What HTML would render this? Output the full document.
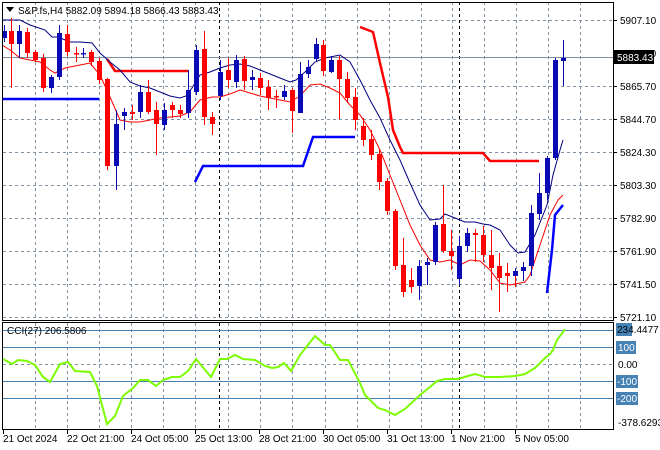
<!DOCTYPE html>
<html><head><meta charset="utf-8"><style>
body{margin:0;background:#fff;width:660px;height:450px;overflow:hidden;font-family:"Liberation Sans",sans-serif}
svg{display:block}
text{font-family:"Liberation Sans",sans-serif;font-size:10px;fill:#000}
</style></head><body>
<svg width="660" height="450" xmlns="http://www.w3.org/2000/svg">
<rect width="660" height="450" fill="#fff"/>
<g stroke="#8090a0" stroke-dasharray="3,3" stroke-width="1">
<path d="M35.5 2V320M67.5 2V320M99.5 2V320M131.5 2V320M163.5 2V320M228.5 2V320M260.5 2V320M292.5 2V320M325.5 2V320M357.5 2V320M389.5 2V320M421.5 2V320M452.5 2V320M484.5 2V320M516.5 2V320M548.5 2V320M580.5 2V320M195.5 2V320"/>
<path d="M35.5 323V429M67.5 323V429M99.5 323V429M131.5 323V429M163.5 323V429M228.5 323V429M260.5 323V429M292.5 323V429M325.5 323V429M357.5 323V429M389.5 323V429M421.5 323V429M452.5 323V429M484.5 323V429M516.5 323V429M548.5 323V429M580.5 323V429M195.5 323V429"/>
<path d="M3 20.5H613M3 86.5H613M3 119.5H613M3 152.5H613M3 185.5H613M3 218.5H613M3 251.5H613M3 284.5H613M3 317.5H613M3 364.5H613"/>
</g>
<path d="M219.5 2V320M219.5 323V429M459.5 2V320M459.5 323V429" stroke="#000" stroke-dasharray="3,3"/>
<path d="M3 57.5H613" stroke="#8090a0"/>
<!-- thick lines -->
<polyline points="2,99 99,99" fill="none" stroke="#0000ff" stroke-width="2.5"/>
<polyline points="195,182 203,166 303,166 313,137 355,137" fill="none" stroke="#0000ff" stroke-width="2.5"/>
<polyline points="547,293 552,250 555,215 563,205" fill="none" stroke="#0000ff" stroke-width="2.5"/>
<polyline points="107,59 115,71 188,71" fill="none" stroke="#ff0000" stroke-width="2.5"/>
<polyline points="360,27 373,32 380,63 388,97 393,130 400,147 403,153 483,153 490,161 539,161" fill="none" stroke="#ff0000" stroke-width="2.5"/>
<!-- MAs -->
<polyline points="2,20 20,20 30,25 45,30 52,37 58,37 70,42 80,42 92,43 100,53 110,62 120,70 130,82 140,86 150,88 160,92 170,96 180,98 186,96 192,88 200,75 210,72 220,68 230,65 240,64 250,66 260,70 270,74 280,78 290,82 296,80 305,72 315,62 325,58 340,55 350,62 360,80 370,100 380,118 390,140 400,160 410,183 420,205 430,220 440,219 445,214 455,218 465,222 475,222 483,224 490,225 500,230 510,245 518,253 525,252 535,235 547,205 553,175 560,150 563,140" fill="none" stroke="#000080" stroke-width="1"/>
<polyline points="2,45 10,50 20,58 30,60 40,62 50,70 55,73 65,68 80,65 90,63 100,75 110,97 120,120 130,122 140,122 150,120 160,118 170,117 180,116 190,112 200,100 212,97 220,97 230,94 240,90 250,93 260,96 270,98 280,100 290,102 300,96 310,85 320,84 330,88 340,93 350,105 360,115 370,130 380,150 390,175 400,200 410,225 420,245 430,260 440,262 450,260 460,265 470,260 480,261 490,270 500,283 510,285 525,282 530,275 540,245 550,215 558,200 563,195" fill="none" stroke="#ff0000" stroke-width="1"/>
<!-- candles -->
<g stroke-width="1">
<g stroke="#0a0ab4" fill="#0a0ab4">
<path d="M4.5 25V42M19.5 25V58M51.5 75V93M59.5 25V80M83.5 48V58M116.5 110V190M124.5 108V130M140.5 85V118M164.5 103V130M188.5 70V118M196.5 45V95M220.5 60V100M236.5 55V88M252.5 70V90M284.5 85V100M300.5 62V113M308.5 60V78M316.5 38V62M331.5 56V73M419.5 260V300M427.5 258V285M435.5 222V265M459.5 236V285M467.5 228V252M515.5 268V285M523.5 262V281M531.5 205V276M539.5 173V220M547.5 156V200M555.5 58V160M563.5 40V86"/>
</g>
<g stroke="#ff0000" fill="#ff0000">
<path d="M11.5 18V88M27.5 28V58M35.5 50V62M43.5 54V92M67.5 25V56M76.5 47V62M91.5 50V66M99.5 58V84M107.5 78V170M132.5 105V120M148.5 80V114M156.5 102V155M172.5 102V118M180.5 105V118M204.5 31V125M212.5 112V135M228.5 58V88M244.5 56V90M260.5 73V95M268.5 80V110M276.5 90V108M292.5 88V133M323.5 40V76M339.5 56V119M347.5 72V103M355.5 88V130M363.5 118V146M371.5 130V160M379.5 150V190M387.5 178V215M395.5 209V270M403.5 238V297M411.5 268V293M443.5 185V253M451.5 230V270M475.5 229V262M483.5 226V262M491.5 230V290M499.5 253V312M507.5 263V292M515.5 272V287"/>
</g>
<g fill="#0a0ab4">
<rect x="2" y="31" width="5" height="7"/><rect x="17" y="31" width="5" height="13"/><rect x="49" y="77" width="5" height="11"/><rect x="57" y="33" width="5" height="44"/><rect x="81" y="53" width="5" height="1.5"/><rect x="114" y="124" width="5" height="42"/><rect x="122" y="112" width="5" height="4"/><rect x="138" y="92" width="5" height="20"/><rect x="162" y="110" width="5" height="15"/><rect x="186" y="90" width="5" height="23"/><rect x="194" y="50" width="5" height="42"/><rect x="218" y="72" width="5" height="24"/><rect x="234" y="60" width="5" height="22"/><rect x="250" y="77" width="5" height="3"/><rect x="282" y="91" width="5" height="6"/><rect x="298" y="74" width="5" height="39"/><rect x="306" y="67" width="5" height="7"/><rect x="314" y="44" width="5" height="15"/><rect x="329" y="60" width="5" height="12"/><rect x="417" y="266" width="5" height="20"/><rect x="425" y="262" width="5" height="3"/><rect x="433" y="225" width="5" height="37"/><rect x="457" y="246" width="5" height="33"/><rect x="465" y="233" width="5" height="13"/><rect x="513" y="271" width="5" height="5"/><rect x="521" y="267" width="5" height="4"/><rect x="529" y="213" width="5" height="53"/><rect x="537" y="193" width="5" height="21"/><rect x="545" y="158" width="5" height="35"/><rect x="553" y="60" width="5" height="98"/><rect x="561" y="58" width="5" height="3"/>
</g>
<g fill="#ff0000">
<rect x="9" y="31" width="5" height="13"/><rect x="25" y="32" width="5" height="21"/><rect x="33" y="52" width="5" height="8"/><rect x="41" y="58" width="5" height="30"/><rect x="65" y="34" width="5" height="18"/><rect x="74" y="53" width="5" height="1.5"/><rect x="89" y="52" width="5" height="10"/><rect x="97" y="61" width="5" height="19"/><rect x="105" y="79" width="5" height="87"/><rect x="130" y="112" width="5" height="2"/><rect x="146" y="92" width="5" height="20"/><rect x="154" y="110" width="5" height="14"/><rect x="170" y="105" width="5" height="5"/><rect x="178" y="110" width="5" height="4"/><rect x="202" y="49" width="5" height="68"/><rect x="210" y="117" width="5" height="7"/><rect x="226" y="70" width="5" height="10"/><rect x="242" y="59" width="5" height="22"/><rect x="258" y="78" width="5" height="10"/><rect x="266" y="87" width="5" height="11"/><rect x="274" y="96" width="5" height="1.5"/><rect x="290" y="90" width="5" height="21"/><rect x="321" y="45" width="5" height="26"/><rect x="337" y="60" width="5" height="19"/><rect x="345" y="79" width="5" height="19"/><rect x="353" y="97" width="5" height="23"/><rect x="361" y="126" width="5" height="14"/><rect x="369" y="139" width="5" height="16"/><rect x="377" y="154" width="5" height="28"/><rect x="385" y="181" width="5" height="30"/><rect x="393" y="211" width="5" height="55"/><rect x="401" y="265" width="5" height="27"/><rect x="409" y="280" width="5" height="7"/><rect x="441" y="224" width="5" height="27"/><rect x="449" y="251" width="5" height="5"/><rect x="473" y="233" width="5" height="2"/><rect x="481" y="235" width="5" height="20"/><rect x="489" y="255" width="5" height="13"/><rect x="497" y="266" width="5" height="12"/><rect x="505" y="273" width="5" height="3"/>
</g>
</g>
<!-- CCI levels -->
<path d="M3 330.5H613M3 347.5H613M3 381.5H613M3 398.5H613" stroke="#4682b4"/>
<polyline points="3,359 12,364 18,360 27,361 35,365 43,377 50,382 60,364 68,362 75,371 90,372 97,386 107,424 115,416 123,396 133,388 140,380 148,380 156,386 163,380 172,377 180,377 188,371 196,359 211,377 220,359 227,359 235,355 243,359 255,360 265,366 272,368 278,367 284,363 291,371 300,355 315,336 325,345 330,345 340,360 348,360 360,383 365,395 378,408 385,410 395,415 405,409 420,395 430,387 437,381 445,379 458,379 468,376 475,374 485,377 500,377 515,376 525,374 535,368 545,358 550,354 553,350 557,340 563,332 565,329" fill="none" stroke="#7cfc00" stroke-width="2"/>
<!-- borders -->
<rect x="2.5" y="2.5" width="611" height="318" fill="none" stroke="#000"/>
<rect x="2.5" y="322.5" width="611" height="107" fill="none" stroke="#000"/>
<!-- header -->
<path d="M6 7L14 7L10 12Z" fill="#000"/>
<text x="18" y="14">S&amp;P.fs,H4  5882.09 5894.18 5866.43 5883.43</text>
<text x="7" y="334">CCI(27) 206.5806</text>
<!-- price axis -->
<g>
<text x="620" y="24">5907.10</text>
<text x="620" y="57">5886.10</text>
<text x="620" y="90">5865.70</text>
<text x="620" y="123">5844.70</text>
<text x="620" y="156">5824.30</text>
<text x="620" y="189">5803.30</text>
<text x="620" y="222">5782.90</text>
<text x="620" y="255">5761.90</text>
<text x="620" y="288">5741.50</text>
<text x="620" y="321">5721.10</text>
<rect x="614" y="50" width="40" height="14" fill="#000"/>
<text x="617" y="61" fill="#fff" style="fill:#fff">5883.43</text>
<rect x="616" y="323" width="16" height="13" fill="#4682b4"/>
<text x="617" y="333">234.4477</text>
<rect x="616" y="341" width="20" height="13" fill="#4682b4"/>
<text x="618" y="351" style="fill:#fff">100</text>
<text x="618" y="368">0.00</text>
<rect x="616" y="375" width="22" height="13" fill="#4682b4"/>
<text x="617" y="385" style="fill:#fff">-100</text>
<rect x="616" y="392" width="22" height="13" fill="#4682b4"/>
<text x="617" y="402" style="fill:#fff">-200</text>
<text x="618" y="426">-378.6293</text>
</g>
<path d="M614 20.5h3M614 53.5h3M614 86.5h3M614 119.5h3M614 152.5h3M614 185.5h3M614 218.5h3M614 251.5h3M614 284.5h3M614 317.5h3" stroke="#000"/>
<!-- time axis -->
<path d="M3.5 430v4M67.5 430v4M131.5 430v4M195.5 430v4M259.5 430v4M323.5 430v4M387.5 430v4M451.5 430v4M515.5 430v4" stroke="#000"/>
<text x="3" y="442">21 Oct 2024</text>
<text x="67" y="442">22 Oct 21:00</text>
<text x="131" y="442">24 Oct 05:00</text>
<text x="195" y="442">25 Oct 13:00</text>
<text x="259" y="442">28 Oct 21:00</text>
<text x="323" y="442">30 Oct 05:00</text>
<text x="387" y="442">31 Oct 13:00</text>
<text x="451" y="442">1 Nov 21:00</text>
<text x="515" y="442">5 Nov 05:00</text>
</svg>
</body></html>
